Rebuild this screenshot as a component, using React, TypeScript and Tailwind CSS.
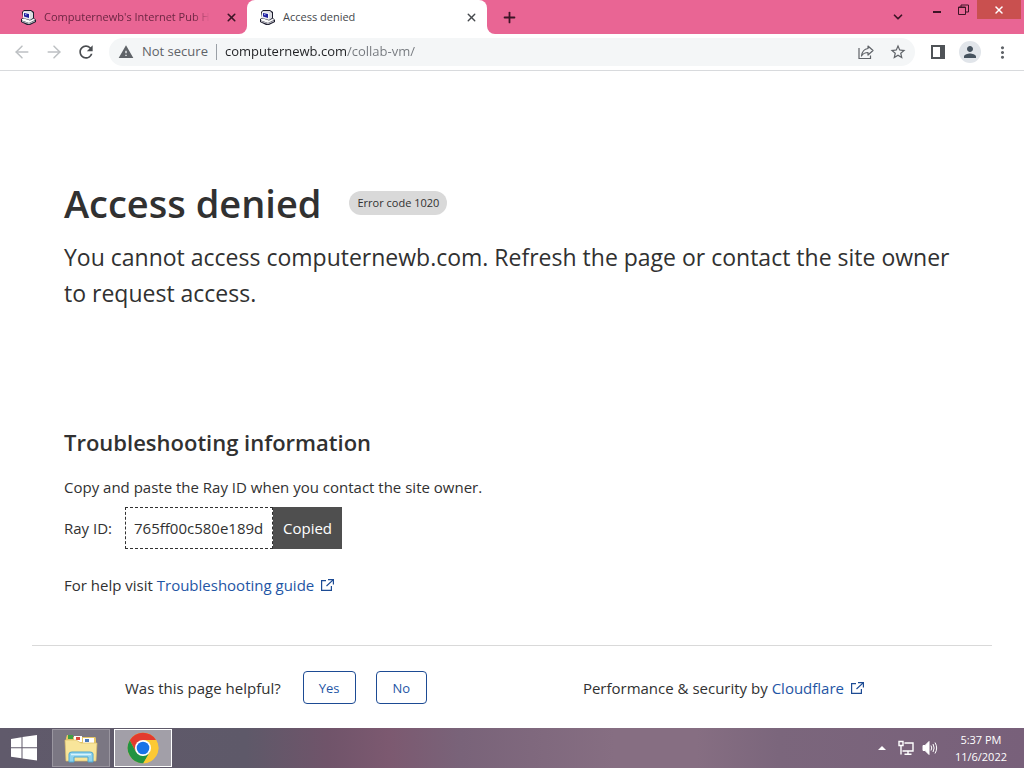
import { ArrowLeft, ArrowRight, ChevronDown, Plus, X } from 'lucide-react'
import { MdRefresh, MdStarBorder, MdWarning, MdPerson, MdMoreVert } from 'react-icons/md'

function ComputerIcon() {
  return (
    <svg width="17" height="17" viewBox="0 0 17 17" className="shrink-0" aria-hidden="true">
      <path d="M2 3 4 1H11L14 3V9L16 11V13L10 16H7L1 13V10L3 9Z" fill="#1b1b2c" />
      <path d="M3 3 4 2H11L13 4V9L10 11 3 9Z" fill="#dcdce2" />
      <path d="M3 3 10 4V10L3 8Z" fill="#f6f6f9" />
      <path d="M4 4 9 5V9L4 7.5Z" fill="#1d1d9e" />
      <path d="M5 5 6.5 5.3V6.5L5 6Z" fill="#a9b3f4" />
      <path d="M2 10 4 9.5 10 11.5 14 9.5 15 11 9 14 2 11.5Z" fill="#fafafa" />
      <path d="M2 11.7 9 14 15 11.5V12.5L9 15.2 2 12.7Z" fill="#b9b9c2" />
    </svg>
  )
}

function ShareIcon() {
  return (
    <svg width="16" height="16" viewBox="0 0 16 16" fill="none" stroke="#5f6368" strokeWidth="1.2" aria-hidden="true">
      <path d="M1 4V14.5H12.5V11.5" />
      <path d="M10 2 15 6.5 10 11V8.5C7 8.5 5 9.5 3.5 12 4 8 6 5 10 4.5Z" strokeLinejoin="round" />
    </svg>
  )
}

function ExternalIcon() {
  return (
    <svg width="14" height="12" viewBox="0 0 14 12" fill="none" stroke="#1d4b94" strokeWidth="1.2" className="ml-1.5 inline-block align-baseline" aria-hidden="true">
      <path d="M6 1.6H1.6V11.4H11.4V7" />
      <path d="M8 .6H13.4V5.5M13.4 .6 6.5 7" />
    </svg>
  )
}

function WindowsLogo() {
  return (
    <svg width="28" height="26" viewBox="0 0 28 26" fill="#fff" aria-hidden="true">
      <path d="M1 4 11.5 2.3V12.3H1ZM12.5 2.1 27 0V12.3H12.5ZM1 13.3H11.5V23.3L1 21.7ZM12.5 13.3H27V25.5L12.5 23.4Z" />
    </svg>
  )
}

function FolderIcon() {
  return (
    <svg width="34" height="30" viewBox="0 0 34 30" aria-hidden="true">
      <path d="M2 5 3 2H8L9 4H31Q32 4 32 6V27H2Z" fill="#e5c766" />
      <path d="M4 2H9V6H4Z" fill="#3f9f45" />
      <path d="M10 3H18V9H10Z" fill="#fff" />
      <path d="M12 4H16V7H12Z" fill="#d9483b" />
      <path d="M19 5H30V10H19Z" fill="#fff" />
      <path d="M21 6H25V9H21Z" fill="#4a78b8" />
      <path d="M1 7H12L17 10H33L32 28H2Z" fill="#f8e59a" stroke="#dcbf68" strokeWidth="0.7" />
      <path d="M5 29V21Q5 19 8 19H26Q29 19 29 21V29H24V24H10V29Z" fill="#8fd3ee" stroke="#4ea6d0" strokeWidth="1" />
      <path d="M7 21.5H27" stroke="#d8f3fc" strokeWidth="1.5" />
    </svg>
  )
}

function ChromeLogo() {
  return (
    <svg width="32" height="32" viewBox="0 0 48 48" aria-hidden="true">
      <circle cx="24" cy="24" r="23" fill="#fcc934" />
      <path d="M24 12H43.6A23 23 0 0 0 4.1 12.5L13.6 30Z" fill="#e33b2e" />
      <path d="M34.4 30 24.5 47A23 23 0 0 1 4.1 12.5L13.6 30 24 36Z" fill="#229342" />
      <path d="M24 12H43.6A23 23 0 0 1 24.5 47L34.4 30Z" fill="#fcc934" />
      <circle cx="24" cy="24" r="12" fill="#fff" />
      <circle cx="24" cy="24" r="9.5" fill="#1a73e8" />
    </svg>
  )
}

function NetworkIcon() {
  return (
    <svg width="16" height="16" viewBox="0 0 16 16" fill="none" stroke="#fff" strokeWidth="1.4" aria-hidden="true">
      <path d="M6.5 3H15V11H4.5M10 11V14M6.5 14.3H13.5" />
      <path d="M1 1.5H5V5.5H1ZM3 5.5V14.5" />
    </svg>
  )
}

function SpeakerIcon() {
  return (
    <svg width="16" height="16" viewBox="0 0 16 16" fill="none" stroke="#fff" aria-hidden="true">
      <path d="M1 5.5H3L7 1.5V14.5L3 10.5H1Z" fill="#fff" />
      <path d="M9 5.5Q10.5 8 9 10.5M11 4Q13.3 8 11 12M13 2.5Q16.3 8 13 13.5" />
    </svg>
  )
}

function TabStrip() {
  return (
    <div className="flex h-[34px] bg-white text-[11px] text-[#45484c]">
      <div className="flex w-[247px] min-w-0 items-center rounded-br-lg bg-[#e96594] pr-[9px] pl-5">
        <button className="flex min-w-0 flex-1 items-center gap-[7px] text-left text-[#6d2643]">
          <ComputerIcon />
          <span className="whitespace-nowrap [mask-image:linear-gradient(to_right,black_90%,transparent)]">
            Computernewb's Internet Pub H
          </span>
        </button>
        <button aria-label="Close tab" className="text-[#3d1526]"><X size={13} strokeWidth={3} /></button>
      </div>
      <div className="w-60 bg-[#e96594]">
        <div className="flex h-full items-center rounded-t-lg bg-white pr-[9px] pl-3">
          <button className="flex flex-1 items-center gap-[7px] text-left">
            <ComputerIcon />
            <span>Access denied</span>
          </button>
          <button aria-label="Close tab"><X size={13} strokeWidth={2.5} /></button>
        </div>
      </div>
      <div className="flex flex-1 items-center rounded-bl-lg bg-[#e96594] pl-3.5 text-[#3d1526]">
        <button aria-label="New tab"><Plus size={17} strokeWidth={2.5} /></button>
        <button aria-label="Search tabs" className="mr-5 ml-auto"><ChevronDown size={14} strokeWidth={3} /></button>
        <div className="flex h-full items-start">
          <button aria-label="Minimize" className="flex h-6 w-6 items-center justify-center">
            <svg width="8" height="2" aria-hidden="true"><path d="M0 0H8V2H0Z" fill="currentColor" /></svg>
          </button>
          <button aria-label="Restore" className="flex h-[18px] w-7 items-center justify-center">
            <svg width="11" height="11" viewBox="0 0 11 11" fill="none" stroke="currentColor" aria-hidden="true">
              <path d="M.5 3H7.5V10.5H.5Z" />
              <path d="M0 3.5H8M3 3V1H10.5V8H8" />
            </svg>
          </button>
          <button aria-label="Close" className="mr-[3px] flex h-[19px] w-11 items-center justify-center bg-[#c9504f] text-white">
            <X size={12} strokeWidth={3} />
          </button>
        </div>
      </div>
    </div>
  )
}

function Toolbar() {
  return (
    <div className="flex h-[37px] items-center border-b border-[#d8dadd] px-3 text-[#5f6368]">
      <button aria-label="Back" className="text-[#bdc0c3]"><ArrowLeft size={20} strokeWidth={1.8} /></button>
      <button aria-label="Forward" className="ml-3 text-[#bdc0c3]"><ArrowRight size={20} strokeWidth={1.8} /></button>
      <button aria-label="Reload" className="ml-3 text-[#4a4d51]"><MdRefresh size={20} /></button>
      <div className="ml-[13px] flex h-7 flex-1 items-center rounded-full bg-[#f4f6f7] pr-2 pl-[9px] text-[13px]">
        <MdWarning size={16} />
        <span className="ml-2">Not secure</span>
        <span className="mx-2 h-4 w-px bg-[#9aa0a6]" />
        <input
          aria-label="Address"
          defaultValue="computernewb.com/collab-vm/"
          className="min-w-0 flex-1 bg-[linear-gradient(to_right,#202124_122px,#74787d_122px)] bg-clip-text text-transparent outline-none"
        />
        <button aria-label="Share"><ShareIcon /></button>
        <button aria-label="Bookmark" className="ml-[15px]"><MdStarBorder size={18} /></button>
      </div>
      <button aria-label="Side panel" className="ml-4">
        <svg width="14" height="14" viewBox="0 0 14 14" aria-hidden="true">
          <path d="M1 1H13V13H1Z" fill="none" stroke="#4f5357" strokeWidth="2" />
          <path d="M9 0H14V14H9Z" fill="#4f5357" />
        </svg>
      </button>
      <button aria-label="Profile" className="ml-3.5 flex size-[22px] items-center justify-center rounded-full bg-[#e1e5ea] text-[#46535f]">
        <MdPerson size={18} />
      </button>
      <button aria-label="Menu" className="ml-3"><MdMoreVert size={19} /></button>
    </div>
  )
}

function ErrorPage() {
  return (
    <main className="flex-1 px-8 text-[#313131]">
      <header className="px-8 pt-[102px]">
        <div className="flex items-center gap-7">
          <h1 className="text-[38px] leading-[60px] font-semibold">Access denied</h1>
          <span className="rounded-full bg-[#d9d9d9] px-2 text-[11px] leading-6 font-medium">Error code 1020</span>
        </div>
        <p className="mt-1.5 text-[23px] leading-9">
          You cannot access computernewb.com. Refresh the page or contact the site owner to request access.
        </p>
      </header>

      <section className="px-8 pt-[113px] text-[15px] leading-6">
        <h2 className="text-[22px] leading-9 font-semibold">Troubleshooting information</h2>
        <p className="mt-[15px]">Copy and paste the Ray ID when you contact the site owner.</p>
        <div className="mt-2 flex items-center">
          <label htmlFor="ray">Ray ID:</label>
          <input
            id="ray"
            readOnly
            defaultValue="765ff00c580e189d"
            className="ml-[13px] h-[42px] w-[148px] border border-dashed border-[#313131] px-2 outline-none"
          />
          <button className="h-[42px] w-[69px] bg-[#4f4f4f] text-white">Copied</button>
        </div>
        <p className="mt-6">
          For help visit{' '}
          <a href="#" className="text-[#1f56a5]">Troubleshooting guide<ExternalIcon /></a>
        </p>
      </section>

      <footer className="mt-12 flex items-center border-t border-[#d9d9d9] pt-[25px] pb-6 pl-[93px] text-[15px] leading-6">
        <p>Was this page helpful?</p>
        <button className="ml-[22px] h-[33px] w-[53px] rounded border border-[#1d4b94] text-[13px] text-[#1f56a5]">Yes</button>
        <button className="ml-5 h-[33px] w-[51px] rounded border border-[#1d4b94] text-[13px] text-[#1f56a5]">No</button>
        <p className="mr-32 ml-auto">
          Performance &amp; security by{' '}
          <a href="#" className="text-[#1f56a5]">Cloudflare<ExternalIcon /></a>
        </p>
      </footer>
    </main>
  )
}

function Taskbar() {
  return (
    <div className="flex h-10 items-center bg-[linear-gradient(to_right,#605a6b_0%,#5e5969_24%,#70546a_32%,#7c5970_38%,#796379_45%,#866e82_60%,#866e82_68%,#7b667c_76%,#78607a_100%)] text-white">
      <button aria-label="Start" className="flex w-[52px] items-center justify-center pr-1"><WindowsLogo /></button>
      <button aria-label="File Explorer" className="flex h-[38px] w-[58px] items-center justify-center border border-[#9a96a0] bg-[#7b7783]">
        <FolderIcon />
      </button>
      <button aria-label="Google Chrome" className="ml-1 flex h-[38px] w-[58px] items-center justify-center border border-white bg-[#a29fa8]">
        <ChromeLogo />
      </button>
      <div className="mr-[17px] ml-auto flex items-center">
        <svg width="8" height="4" aria-hidden="true"><path d="M0 4 4 0 8 4Z" fill="#fff" /></svg>
        <span className="ml-3"><NetworkIcon /></span>
        <span className="ml-2"><SpeakerIcon /></span>
        <div className="ml-[17px] text-center text-[11px] leading-[17px]">
          <div>5:37 PM</div>
          <div>11/6/2022</div>
        </div>
      </div>
    </div>
  )
}

export default function App() {
  return (
    <div className="flex min-h-screen flex-col bg-white font-['Open_Sans','Noto_Sans',sans-serif]">
      <TabStrip />
      <Toolbar />
      <ErrorPage />
      <Taskbar />
    </div>
  )
}
